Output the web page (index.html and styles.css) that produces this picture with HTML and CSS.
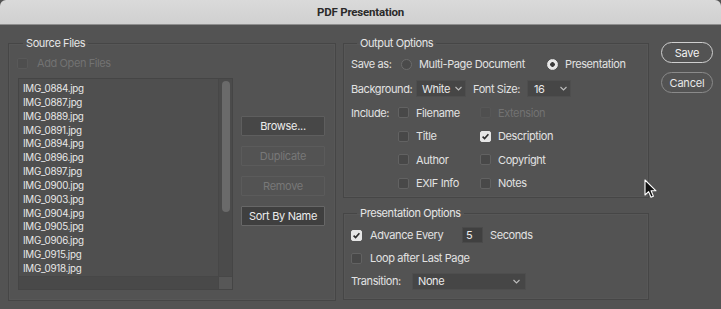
FILE: index.html
```html
<!DOCTYPE html>
<html>
<head>
<meta charset="utf-8">
<link rel="stylesheet" href="styles.css">
</head>
<body>
<div class="window">
  <div class="titlebar">PDF Presentation</div>
  <div class="content">
    <fieldset class="group source">
      <legend>Source Files</legend>
      <div class="row add-open disabled"><span class="box"></span><span>Add Open Files</span></div>
      <div class="source-body">
        <div class="list">
          <ul class="files">
            <li>IMG_0884.jpg</li>
            <li>IMG_0887.jpg</li>
            <li>IMG_0889.jpg</li>
            <li>IMG_0891.jpg</li>
            <li>IMG_0894.jpg</li>
            <li>IMG_0896.jpg</li>
            <li>IMG_0897.jpg</li>
            <li>IMG_0900.jpg</li>
            <li>IMG_0903.jpg</li>
            <li>IMG_0904.jpg</li>
            <li>IMG_0905.jpg</li>
            <li>IMG_0906.jpg</li>
            <li>IMG_0915.jpg</li>
            <li>IMG_0918.jpg</li>
          </ul>
          <div class="vscroll"><div class="thumb"></div></div>
          <div class="hscroll"></div>
          <div class="corner"></div>
        </div>
        <div class="list-buttons">
          <button class="btn">Browse...</button>
          <button class="btn off">Duplicate</button>
          <button class="btn off">Remove</button>
          <button class="btn dark">Sort By Name</button>
        </div>
      </div>
    </fieldset>

    <div class="right">
      <fieldset class="group output">
        <legend>Output Options</legend>
        <div class="row saveas">
          <span class="lbl w-saveas">Save as:</span>
          <span class="radio"></span><span class="lbl w-multi">Multi-Page Document</span>
          <span class="radio on"></span><span class="lbl">Presentation</span>
        </div>
        <div class="row bgrow">
          <span class="lbl w-bg">Background:</span>
          <span class="select s-white"><span>White</span><svg class="chev" width="7" height="5" viewBox="0 0 7 5"><polyline points="0.5,1 3.5,4 6.5,1" fill="none" stroke="#bdbdbd" stroke-width="1.1"/></svg></span>
          <span class="lbl w-fs">Font Size:</span>
          <span class="select s-16"><span>16</span><svg class="chev" width="7" height="5" viewBox="0 0 7 5"><polyline points="0.5,1 3.5,4 6.5,1" fill="none" stroke="#bdbdbd" stroke-width="1.1"/></svg></span>
        </div>
        <div class="include">
          <span class="lbl">Include:</span>
          <span class="box"></span><span class="lbl">Filename</span>
          <span class="box dis"></span><span class="lbl dim">Extension</span>

          <span></span>
          <span class="box"></span><span class="lbl">Title</span>
          <span class="box on"><svg width="9" height="9" viewBox="0 0 9 9"><polyline points="1.6,4.6 3.6,6.6 7.4,2.2" fill="none" stroke="#2b2b2b" stroke-width="1.6"/></svg></span><span class="lbl">Description</span>

          <span></span>
          <span class="box"></span><span class="lbl">Author</span>
          <span class="box"></span><span class="lbl">Copyright</span>

          <span></span>
          <span class="box"></span><span class="lbl">EXIF Info</span>
          <span class="box"></span><span class="lbl">Notes</span>
        </div>
      </fieldset>

      <fieldset class="group present">
        <legend>Presentation Options</legend>
        <div class="row prow">
          <span class="box on"><svg width="9" height="9" viewBox="0 0 9 9"><polyline points="1.6,4.6 3.6,6.6 7.4,2.2" fill="none" stroke="#2b2b2b" stroke-width="1.6"/></svg></span>
          <span class="lbl w-adv">Advance Every</span>
          <span class="num">5</span>
          <span class="lbl">Seconds</span>
        </div>
        <div class="row prow">
          <span class="box"></span>
          <span class="lbl">Loop after Last Page</span>
        </div>
        <div class="row prow trow">
          <span class="lbl w-tr">Transition:</span>
          <span class="select s-none"><span>None</span><svg class="chev" width="7" height="5" viewBox="0 0 7 5"><polyline points="0.5,1 3.5,4 6.5,1" fill="none" stroke="#bdbdbd" stroke-width="1.1"/></svg></span>
        </div>
      </fieldset>
    </div>

    <div class="dialog-buttons">
      <button class="pill primary">Save</button>
      <button class="pill">Cancel</button>
    </div>
  </div>

  <svg class="cursor" width="13" height="20" viewBox="0 0 13 20">
    <path d="M1 1 L1 16 L4.6 12.6 L7 18.2 L9.4 17.2 L7.1 11.8 L12 11.8 Z" fill="#111" stroke="#fff" stroke-width="1.1" stroke-linejoin="round"/>
  </svg>
</div>
</body>
</html>
```
FILE: styles.css
```css
* { box-sizing: border-box; }
html, body { margin: 0; padding: 0; background: #535353; }
body {
  font-family: "Inter", "Noto Sans", sans-serif;
  font-size: 11px;
  letter-spacing: -0.4px;
  color: #e2e2e2;
}
.window {
  position: relative;
  width: 721px;
  height: 309px;
  background: #535353;
  overflow: hidden;
}
.titlebar {
  height: 25px;
  line-height: 24px;
  text-align: center;
  font-family: "Roboto", "Inter", sans-serif;
  font-weight: 700;
  font-size: 11.5px;
  letter-spacing: -0.2px;
  color: #2a2a2a;
  background: linear-gradient(#dadada, #d0d0d0);
  border-bottom: 1px solid #8e8e8e;
  border-radius: 6px 6px 0 0;
}
.content {
  display: flex;
  padding: 11px 8px 0 8px;
}
.group {
  margin: 0;
  padding: 0;
  border: 1px solid #464646;
  box-shadow: inset 0 0 0 1px #575757;
  min-width: 0;
}
.group legend {
  padding: 0 3px;
  margin-left: 6px;
  line-height: 14px;
  font-size: 11px;
  color: #e6e6e6;
}
.row { display: flex; align-items: center; }
.lbl { white-space: nowrap; }

/* source files */
.source {
  width: 328px;
  height: 265px;
  padding: 6px 0 0 8px;
  display: flex;
  flex-direction: column;
}
.add-open { height: 14px; }
.add-open .box { margin-right: 9px; }
.disabled { color: #727272; }
.disabled .box { background: #4e4e4e; border-color: #595959; }
.source-body {
  display: flex;
  margin-top: 8px;
}
.list {
  position: relative;
  width: 215px;
  height: 212px;
  margin-left: 1px;
  background: #4f4f4f;
  border: 1px solid #454545;
  overflow: hidden;
}
.files {
  list-style: none;
  margin: 0;
  padding: 3px 0 0 4px;
  font-size: 9.8px;
  letter-spacing: -0.3px;
  line-height: 13.85px;
  color: #e8e8e8;
}
.vscroll {
  position: absolute;
  right: 0; top: 0; bottom: 13px;
  width: 14px;
  background: #4b4b4b;
  border-left: 1px solid #474747;
}
.thumb {
  margin: 2px 0 0 3px;
  width: 8px;
  height: 131px;
  border-radius: 4px;
  background: #6a6a6a;
}
.hscroll {
  position: absolute;
  left: 0; right: 14px; bottom: 0;
  height: 13px;
  background: #494949;
  border-top: 1px solid #474747;
}
.corner {
  position: absolute;
  right: 0; bottom: 0;
  width: 14px; height: 13px;
  background: #575757;
  border-left: 1px solid #474747;
  border-top: 1px solid #474747;
}
.list-buttons {
  display: flex;
  flex-direction: column;
  gap: 10px;
  margin-left: 8px;
  padding-top: 38px;
}
.btn {
  width: 84px;
  height: 20px;
  padding: 0;
  font-family: inherit;
  font-size: 11px;
  letter-spacing: -0.3px;
  color: #ececec;
  background: #474747;
  border: 1px solid #5e5e5e;
  border-radius: 1px;
}
.btn.off { background: #535353; color: #787878; border-color: #5b5b5b; }
.btn.dark { background: #3f3f3f; border-color: #676767; }

/* right column */
.right {
  width: 306px;
  margin-left: 7px;
  display: flex;
  flex-direction: column;
}
.output {
  height: 162px;
  padding: 4px 0 0 7px;
}
.saveas { height: 20px; }
.w-saveas { width: 50px; }
.radio {
  width: 11px; height: 11px;
  border-radius: 50%;
  background: #4a4a4a;
  border: 1px solid #6c6c6c;
  margin-right: 7px;
  flex: none;
}
.radio.on {
  background: radial-gradient(circle, #3a3a3a 0 2px, #e8e8e8 2.6px);
  border-color: #e8e8e8;
}
.w-multi { width: 128px; }
.bgrow { height: 21px; margin-top: 4px; }
.w-bg { width: 65px; }
.w-fs { width: 54px; margin-left: 7px; }
.select {
  display: flex;
  align-items: center;
  justify-content: space-between;
  height: 17px;
  padding: 0 3px 0 6px;
  background: #464646;
  border: 1px solid #4e4e4e;
  color: #eaeaea;
}
.s-white { width: 50px; padding-left: 5px; }
.s-16 { width: 44px; }
.chev { flex: none; }
.include {
  display: grid;
  grid-template-columns: 47px 11px 71px 11px auto;
  grid-auto-rows: 23.5px;
  align-items: center;
  margin-top: 2px;
}
.include .box { margin: 0; }
.include > .lbl:not(:first-child) { padding-left: 7px; }
.box {
  display: inline-flex;
  align-items: center;
  justify-content: center;
  width: 11px; height: 11px;
  flex: none;
  border-radius: 2px;
  background: #484848;
  border: 1px solid #626262;
}
.box.on { background: #e6e6e6; border-color: #e6e6e6; }
.box.dis { background: #4f4f4f; border-color: #575757; }
.dim { color: #727272; }

.present {
  height: 94px;
  margin-top: 8px;
  padding: 5px 0 0 7px;
}
.prow { height: 20px; margin-bottom: 3px; }
.prow .box { margin-right: 8px; }
.w-adv { width: 92px; }
.num {
  width: 21px; height: 16px;
  line-height: 14px;
  padding-left: 3px;
  background: #404040;
  border: 1px solid #4a4a4a;
  color: #eeeeee;
  margin-right: 7px;
}
.trow { margin-top: 2px; }
.w-tr { width: 61px; }
.s-none { width: 114px; padding-left: 5px; padding-right: 5px; }

/* dialog buttons */
.dialog-buttons {
  display: flex;
  flex-direction: column;
  gap: 9px;
  margin-left: 12px;
  padding-top: 6px;
}
.pill {
  width: 52px;
  height: 21px;
  padding: 0;
  font-family: inherit;
  font-size: 11px;
  letter-spacing: -0.2px;
  color: #e8e8e8;
  background: transparent;
  border: 1px solid #8a8a8a;
  border-radius: 11px;
}
.pill.primary { border-color: #cfcfcf; color: #f2f2f2; }

.cursor {
  position: absolute;
  left: 644px;
  top: 179px;
}
```
